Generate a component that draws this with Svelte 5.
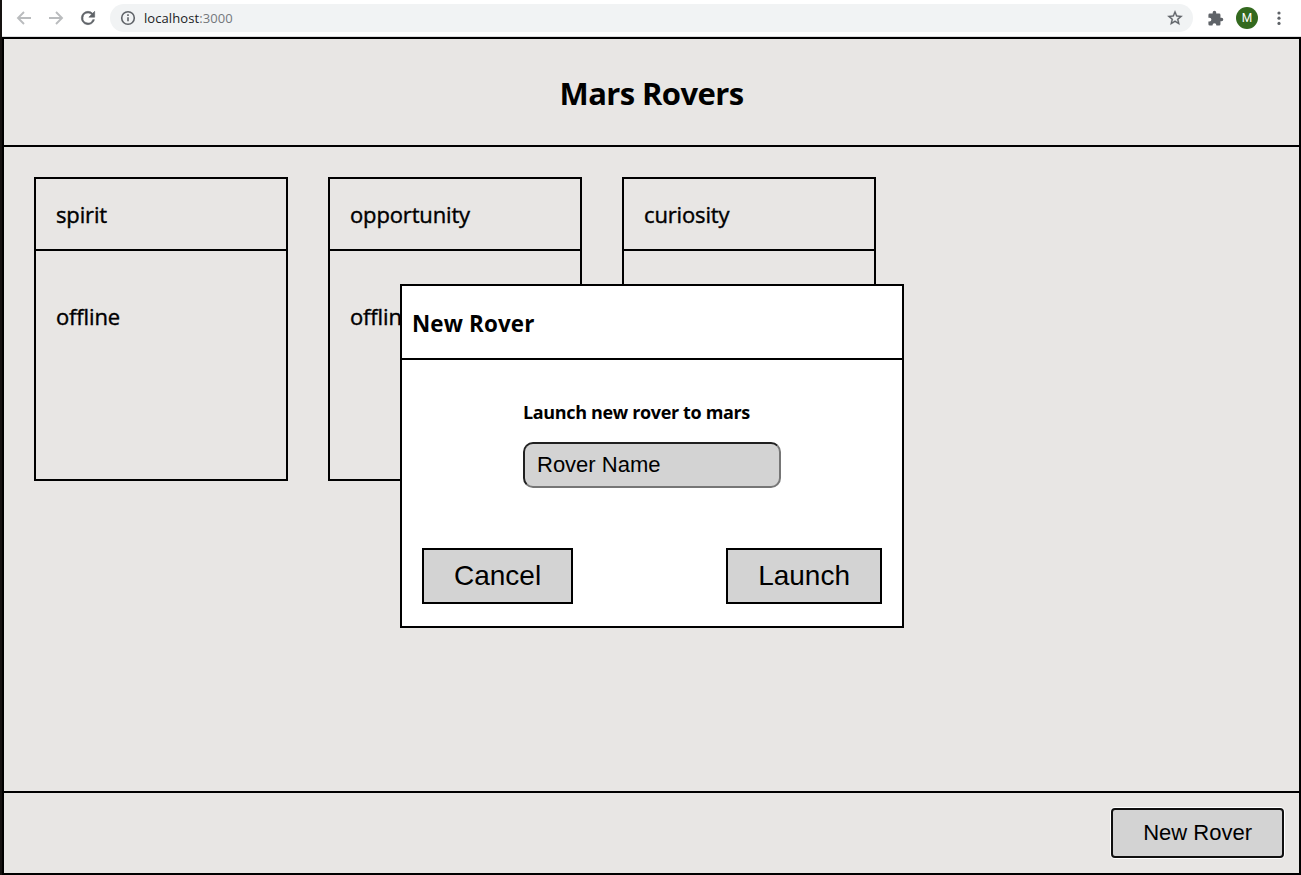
<script>
  const rovers = [
    { name: 'spirit', status: 'offline' },
    { name: 'opportunity', status: 'offline' },
    { name: 'curiosity', status: 'offline' }
  ];
  let roverName = $state('');
</script>

<div class="window">
  <div class="toolbar">
    <svg class="nav dim" viewBox="0 0 20 20"><path d="M17 10H4.5M10 4l-6 6 6 6" /></svg>
    <svg class="nav dim" viewBox="0 0 20 20"><path d="M3 10h12.5M10 4l6 6-6 6" /></svg>
    <svg class="nav" viewBox="0 0 24 24"><path stroke="#5f6368" stroke-width=".7" d="M17.65 6.35A7.96 7.96 0 0 0 12 4a8 8 0 1 0 7.73 10h-2.08A6 6 0 1 1 12 6c1.66 0 3.14.69 4.22 1.78L13 11h7V4l-2.35 2.35z" /></svg>
    <div class="address">
      <svg class="info" viewBox="0 0 16 16"><circle cx="8" cy="8" r="6.3" /><path d="M8 7.2v4M8 4.3v1.7" /></svg>
      <span class="url">localhost<span class="port">:3000</span></span>
      <svg class="star" viewBox="0 0 24 24"><path stroke="#5f6368" stroke-width=".4" d="M22 9.24l-7.19-.62L12 2 9.19 8.63 2 9.24l5.46 4.73L5.82 21 12 17.27 18.18 21l-1.63-7.03L22 9.24zM12 15.4l-3.76 2.27 1-4.28-3.32-2.88 4.38-.38L12 6.1l1.71 4.04 4.38.38-3.32 2.88 1 4.28L12 15.4z" /></svg>
    </div>
    <svg class="puzzle" viewBox="0 0 24 24"><path d="M20.5 11H19V7a2 2 0 0 0-2-2h-4V3.5a2.5 2.5 0 0 0-5 0V5H4a2 2 0 0 0-2 2v3.8h1.5a2.7 2.7 0 0 1 0 5.4H2V20a2 2 0 0 0 2 2h3.8v-.5a2.7 2.7 0 0 1 5.4 0v.5H17a2 2 0 0 0 2-2v-4h1.5a2.5 2.5 0 0 0 0-5z" /></svg>
    <span class="avatar">M</span>
    <svg class="menu" viewBox="0 0 16 16"><circle cx="8" cy="3" r="1.6" /><circle cx="8" cy="8.2" r="1.6" /><circle cx="8" cy="13.4" r="1.6" /></svg>
  </div>

  <div class="app">
    <header><h1>Mars Rovers</h1></header>
    <main>
      {#each rovers as rover}
        <article>
          <div class="name">{rover.name}</div>
          <div class="status">{rover.status}</div>
        </article>
      {/each}
    </main>
    <footer><button class="new">New Rover</button></footer>
  </div>

  <div class="modal">
    <div class="modal-head"><h2>New Rover</h2></div>
    <div class="modal-body">
      <label for="rover">Launch new rover to mars</label>
      <input id="rover" placeholder="Rover Name" bind:value={roverName} />
    </div>
    <div class="actions">
      <button>Cancel</button>
      <button>Launch</button>
    </div>
  </div>
</div>

<style>
  :global(body) { background: #151210; overflow: hidden; }
  * { box-sizing: border-box; }
  .window {
    position: relative;
    height: 875px;
    padding-left: 2px;
    display: flex;
    flex-direction: column;
    font-family: "Open Sans", "Noto Sans", sans-serif;
    color: #000;
  }
  .toolbar {
    height: 37px;
    flex: none;
    background: #fff;
    border-bottom: 1px solid #dcdddf;
    display: flex;
    align-items: center;
    padding-left: 12px;
  }
  svg { fill: #5f6368; flex: none; display: block; }
  .nav { width: 20px; height: 20px; margin-right: 12px; }
  .dim { fill: none; stroke: #babcbe; stroke-width: 1.9; }
  .address {
    width: 1083px;
    height: 28px;
    border-radius: 14px;
    background: #f1f3f4;
    display: flex;
    align-items: center;
    padding: 0 9px 0 10px;
  }
  .info { width: 16px; height: 16px; fill: none; stroke: #5f6368; stroke-width: 1.6; }
  .url {
    flex: 1;
    margin-left: 8px;
    font-size: 13px;
    letter-spacing: 0.08px;
    color: #202124;
  }
  .port { color: #74787c; }
  .star { width: 18px; height: 18px; }
  .puzzle { width: 17px; height: 17px; margin-left: 14px; }
  .avatar {
    width: 22px;
    height: 22px;
    margin-left: 12px;
    border-radius: 50%;
    background: #33691e;
    color: #fff;
    font: 12px/22px Roboto, sans-serif;
    text-align: center;
  }
  .menu { width: 16px; height: 16px; margin-left: 13px; }
  .app {
    flex: 1;
    border: 2px solid #000;
    background: #e8e6e4;
    display: flex;
    flex-direction: column;
  }
  header {
    height: 108px;
    border-bottom: 2px solid #000;
    display: flex;
    align-items: center;
    justify-content: center;
    padding-top: 2px;
  }
  h1, h2 { margin: 0; }
  h1 { font-size: 31px; letter-spacing: -0.6px; font-weight: 700; }
  main { flex: 1; display: flex; gap: 40px; padding: 30px; }
  article {
    width: 254px;
    height: 304px;
    border: 2px solid #000;
    font-size: 22px;
    line-height: 30px;
    letter-spacing: -0.15px;
    -webkit-text-stroke: 0.4px #000;
  }
  .name {
    height: 72px;
    border-bottom: 2px solid #000;
    padding: 20px 20px 0;
  }
  .status { padding: 50px 20px 0; }
  footer {
    height: 82px;
    border-top: 2px solid #000;
    display: flex;
    align-items: flex-start;
    justify-content: flex-end;
    padding: 15px 15px 0;
  }
  button {
    height: 56px;
    padding: 0 30px;
    border: 2px solid #000;
    border-radius: 0;
    background: #d3d3d3;
    color: #000;
    font: 28px "Liberation Sans", Arial, sans-serif;
  }
  .new {
    height: 50px;
    font-size: 22px;
    border-color: #101010;
    border-radius: 4px;
    box-shadow: 0 0 0 1px #fff;
  }
  .modal {
    position: absolute;
    left: 400px;
    top: 284px;
    width: 504px;
    height: 344px;
    border: 2px solid #000;
    background: #fff;
    display: flex;
    flex-direction: column;
  }
  .modal-head {
    height: 74px;
    border-bottom: 2px solid #000;
    padding: 22px 10px 0;
  }
  h2 { font-size: 22.4px; line-height: 32px; letter-spacing: 0.15px; font-weight: 700; }
  .modal-body {
    flex: 1;
    width: 258px;
    margin-left: 121px;
    padding-top: 40px;
    display: flex;
    flex-direction: column;
  }
  label {
    height: 42px;
    font-size: 18px;
    font-weight: 700;
    line-height: 25px;
    letter-spacing: -0.35px;
    white-space: nowrap;
  }
  input {
    width: 258px;
    height: 46px;
    margin: 0;
    padding: 0 12px 1px;
    border: 2px solid;
    border-color: #202020 #767676 #767676 #202020;
    border-radius: 10px;
    background: #d3d3d3;
    color: #000;
    font: 22px "Liberation Sans", Arial, sans-serif;
  }
  input::placeholder { color: #000; opacity: 1; }
  .actions {
    display: flex;
    justify-content: space-between;
    padding: 0 20px 22px;
  }
</style>
